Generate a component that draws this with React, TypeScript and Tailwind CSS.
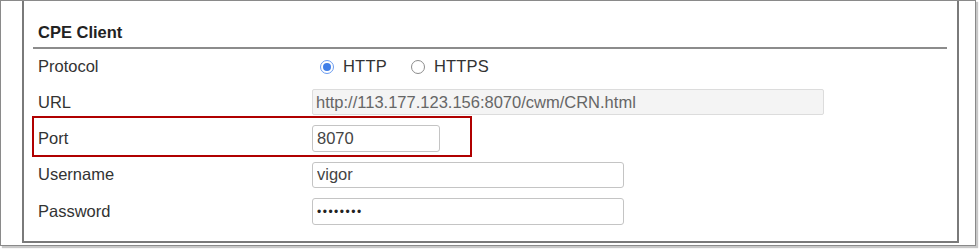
import React from 'react';

const fieldText = "text-[16.5px] text-[#444] font-['Liberation_Sans',Arial,sans-serif]";

function Radio({ checked, label }: { checked?: boolean; label: string }) {
  return (
    <label className="flex items-center">
      {checked ? (
        <span className="flex h-[14px] w-[14px] items-center justify-center rounded-full border border-[#6b9cf0] bg-white">
          <span className="h-[8px] w-[8px] rounded-full bg-[#3f7ee8]" />
        </span>
      ) : (
        <span className="h-[14px] w-[14px] rounded-full border border-[#8c8c8c] bg-white" />
      )}
      <span className="ml-[9px] text-[16.5px] tracking-[0.2px] text-[#333]">{label}</span>
    </label>
  );
}

export default function App() {
  return (
    <div className="h-[249px] w-[979px] bg-white font-['Liberation_Sans',Arial,sans-serif]">
      <div className="h-[246px] w-[976px] border border-[#8a8a8a] bg-white shadow-[2px_2px_1px_#c8c8c8]">
        <div className="relative ml-[21px] h-[242px] w-[937px] border-x-2 border-b-2 border-[#7a7a7a]">
          <div className="ml-[9px] mr-[10px] border-b-2 border-[#8c8c8c] pb-[5px] pl-[5px] pt-[21px] text-[16.5px] font-bold leading-[20px] text-[#222]">
            CPE Client
          </div>

          <div className="pl-[14px] text-[16.5px] text-[#333]">
            <div className="flex h-[35px] items-center">
              <div className="w-[274px]">Protocol</div>
              <div className="flex items-center gap-[24px] pl-[8px]">
                <Radio checked label="HTTP" />
                <Radio label="HTTPS" />
              </div>
            </div>

            <div className="flex h-[36px] items-center">
              <div className="w-[274px]">URL</div>
              <input
                readOnly
                value="http://113.177.123.156:8070/cwm/CRN.html"
                className={`h-[26px] w-[512px] rounded-[2px] border border-[#dcdcdc] bg-[#f4f4f4] px-[3px] text-[#666] outline-none ${fieldText}`}
              />
            </div>

            <div className="flex h-[36px] items-center">
              <div className="w-[274px]">Port</div>
              <input
                readOnly
                value="8070"
                className={`h-[27px] w-[128px] rounded-[3px] border border-[#c4c4c4] bg-white px-[4px] outline-none ${fieldText}`}
              />
            </div>

            <div className="flex h-[37px] items-center">
              <div className="w-[274px]">Username</div>
              <input
                readOnly
                value="vigor"
                className={`h-[26px] w-[312px] rounded-[3px] border border-[#c4c4c4] bg-white px-[4px] outline-none ${fieldText}`}
              />
            </div>

            <div className="flex h-[37px] items-center">
              <div className="w-[274px]">Password</div>
              <input
                readOnly
                type="password"
                value="12345678"
                className="h-[27px] w-[312px] rounded-[3px] border border-[#c4c4c4] bg-white px-[4px] font-['Liberation_Sans',Arial,sans-serif] text-[12px] tracking-[1.5px] text-[#222] outline-none"
              />
            </div>
          </div>

          <div className="absolute left-[8px] top-[115px] h-[41px] w-[440px] border-2 border-[#b00000]" />
        </div>
      </div>
    </div>
  );
}
